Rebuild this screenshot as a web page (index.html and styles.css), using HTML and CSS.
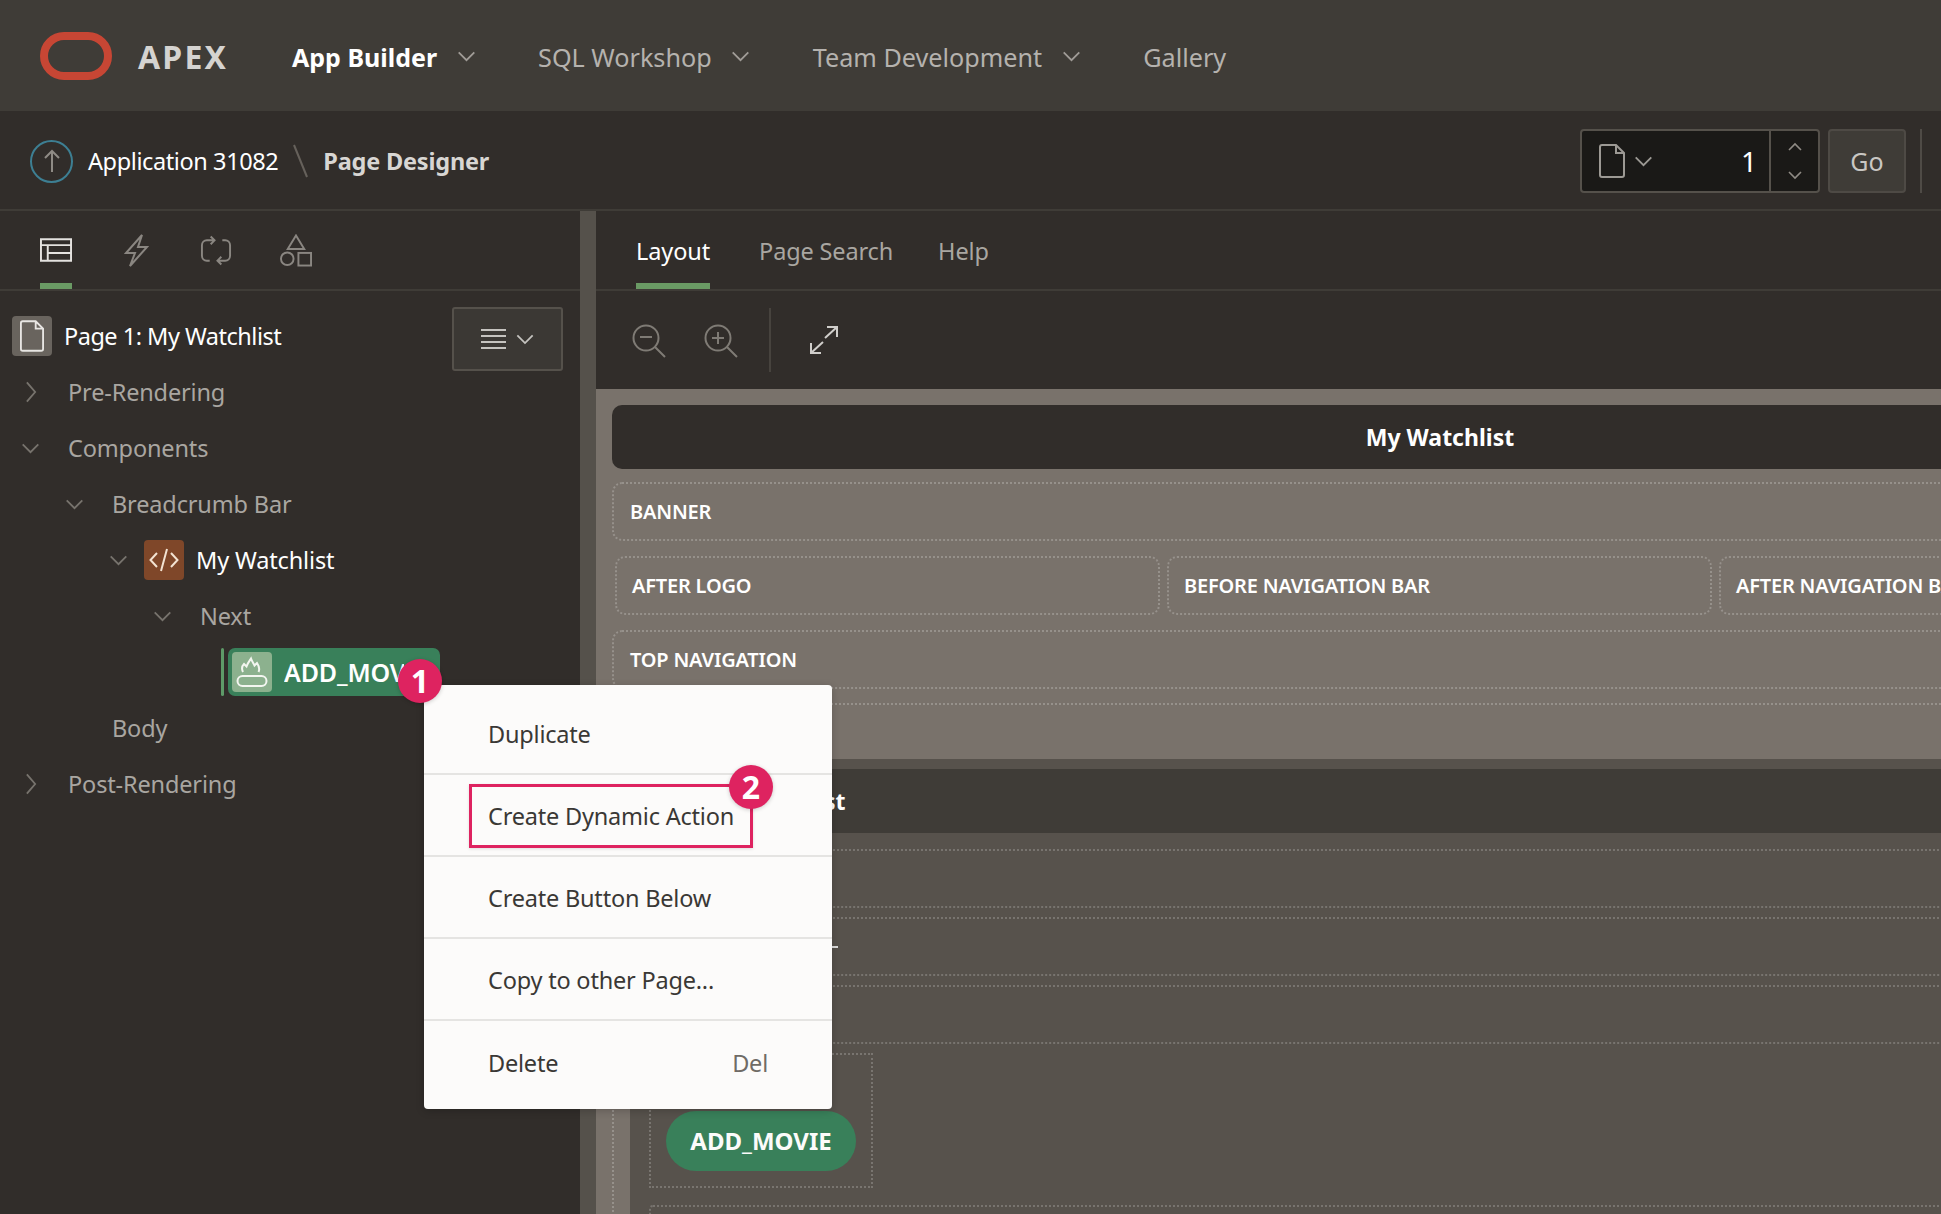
FILE: index.html
```html
<!DOCTYPE html>
<html lang="en">
<head>
  <meta charset="UTF-8" />
  <title>Page Designer</title>
  <link rel="stylesheet" href="styles.css">
</head>
<body>
  <svg class="sprite" width="0" height="0">
    <symbol id="chev-down" viewBox="0 0 20 12"><path d="M1.5 1.5 10 10l8.5-8.5" fill="none" stroke="currentColor" stroke-width="2"/></symbol>
    <symbol id="chev-right" viewBox="0 0 12 24"><path d="M1.5 1.5 10.5 12l-9 10.5" fill="none" stroke="currentColor" stroke-width="2"/></symbol>
    <symbol id="doc" viewBox="0 0 26 34"><path d="M3 1h14l8 8v22a2 2 0 0 1-2 2H3a2 2 0 0 1-2-2V3a2 2 0 0 1 2-2zM17 1v8h8" fill="none" stroke="currentColor" stroke-width="2"/></symbol>
  </svg>

  <div class="page">
    <header class="topbar">
      <svg class="logo" width="72" height="48" viewBox="0 0 72 48"><rect x="4" y="4" width="64" height="40" rx="20" fill="none" stroke="#c74634" stroke-width="8"/></svg>
      <span class="brand">APEX</span>
      <nav class="mainnav">
        <a class="nav-item nav-active">App Builder <svg class="nav-chev"><use href="#chev-down"/></svg></a>
        <a class="nav-item">SQL Workshop <svg class="nav-chev"><use href="#chev-down"/></svg></a>
        <a class="nav-item">Team Development <svg class="nav-chev"><use href="#chev-down"/></svg></a>
        <a class="nav-item">Gallery</a>
      </nav>
    </header>

    <div class="crumbbar">
      <span class="up-circle">
        <svg width="18" height="24" viewBox="0 0 18 24"><path d="M9 23V2M2 9l7-7 7 7" fill="none" stroke="#8f8b85" stroke-width="2"/></svg>
      </span>
      <span class="crumb">Application 31082</span>
      <svg class="crumb-sep" width="15" height="34" viewBox="0 0 15 34"><path d="M1 1l13 32" stroke="#66615b" stroke-width="2"/></svg>
      <span class="crumb crumb-current">Page Designer</span>

      <div class="page-picker">
        <div class="picker-main">
          <svg class="picker-doc"><use href="#doc"/></svg>
          <svg class="picker-chev"><use href="#chev-down"/></svg>
          <span class="picker-num">1</span>
        </div>
        <div class="picker-steps">
          <svg class="step-up" width="14" height="9" viewBox="0 0 14 9"><path d="M1 8l6-6 6 6" fill="none" stroke="currentColor" stroke-width="1.6"/></svg>
          <svg width="14" height="9" viewBox="0 0 14 9"><path d="M1 1l6 6 6-6" fill="none" stroke="currentColor" stroke-width="1.6"/></svg>
        </div>
      </div>
      <button class="go-btn">Go</button>
      <span class="bar-sep"></span>
    </div>

    <div class="workspace">
      <aside class="sidebar">
        <div class="side-tabs">
          <span class="side-tab side-tab-on">
            <svg width="33" height="24" viewBox="0 0 33 24"><path d="M1 1h31v22H1zM1 7h31M8 7v16M8 15h24" fill="none" stroke="currentColor" stroke-width="2"/></svg>
          </span>
          <span class="side-tab">
            <svg width="25" height="33" viewBox="0 0 25 33"><path d="M18 1 2 19h9L6 32l17-19h-9z" fill="none" stroke="currentColor" stroke-width="2"/></svg>
          </span>
          <span class="side-tab">
            <svg width="33" height="33" viewBox="0 0 33 33"><path d="M14 6H7a5 5 0 0 0-5 5v11a5 5 0 0 0 5 5h3M11 2l4 4-4 4M19 27h7a5 5 0 0 0 5-5V11a5 5 0 0 0-5-5h-3M22 23l-4 4 4 4" fill="none" stroke="currentColor" stroke-width="2"/></svg>
          </span>
          <span class="side-tab">
            <svg width="33" height="33" viewBox="0 0 33 33"><path d="M16.5 1 25 15H8z" fill="none" stroke="currentColor" stroke-width="2"/><circle cx="7.5" cy="25" r="6.5" fill="none" stroke="currentColor" stroke-width="2"/><rect x="19" y="19" width="13" height="13" fill="none" stroke="currentColor" stroke-width="2"/></svg>
          </span>
        </div>

        <div class="tree">
          <div class="tree-head">
            <span class="tile tile-page"><svg width="24" height="34"><use href="#doc"/></svg></span>
            <span class="tree-title">Page 1: My Watchlist</span>
            <button class="tree-menu">
              <svg width="25" height="22" viewBox="0 0 25 22"><path d="M0 2h25M0 8h25M0 14h25M0 20h25" stroke="currentColor" stroke-width="2"/></svg>
              <svg class="tree-menu-chev"><use href="#chev-down"/></svg>
            </button>
          </div>
          <div class="node lvl-0"><span class="slot"><svg class="chev-r"><use href="#chev-right"/></svg></span>Pre-Rendering</div>
          <div class="node lvl-0"><span class="slot"><svg class="chev-d"><use href="#chev-down"/></svg></span>Components</div>
          <div class="node lvl-1"><span class="slot"><svg class="chev-d"><use href="#chev-down"/></svg></span>Breadcrumb Bar</div>
          <div class="node lvl-2 node-bright">
            <span class="slot slot-short"><svg class="chev-d"><use href="#chev-down"/></svg></span>
            <span class="tile tile-code">
              <svg width="30" height="26" viewBox="0 0 30 26"><path d="M8 6 1.5 13 8 20M22 6l6.5 7L22 20M18 2l-6 22" fill="none" stroke="#f3e3d2" stroke-width="2"/></svg>
            </span>
            My Watchlist
          </div>
          <div class="node lvl-3"><span class="slot"><svg class="chev-d"><use href="#chev-down"/></svg></span>Next</div>
          <div class="node lvl-4">
            <span class="sel-mark"></span>
            <div class="sel-pill">
              <span class="tile tile-flame">
                <svg width="40" height="40" viewBox="0 0 40 40"><rect x="5.5" y="24" width="29" height="10" rx="5" fill="none" stroke="currentColor" stroke-width="2"/><path d="M11 20c-1.5-3-1-6 1-8l2.5 2.5c1-3 2.5-5 4.5-8 1 3 2.5 5 3.5 7l2.5-2.5c2 3 3 6 1.5 9" fill="none" stroke="currentColor" stroke-width="2"/></svg>
              </span>
              <span class="sel-text">ADD_MOVIE</span>
              <span class="badge badge-one">1</span>
            </div>
          </div>
          <div class="node lvl-1 no-chev">Body</div>
          <div class="node lvl-0"><span class="slot"><svg class="chev-r"><use href="#chev-right"/></svg></span>Post-Rendering</div>
        </div>
      </aside>

      <div class="splitter"></div>

      <main class="designer">
        <div class="tabs">
          <a class="tab tab-on">Layout</a>
          <a class="tab tab-mid">Page Search</a>
          <a class="tab">Help</a>
        </div>
        <div class="toolbar">
          <svg class="tool" width="34" height="34" viewBox="0 0 34 34"><circle cx="14" cy="14" r="12.5" fill="none" stroke="currentColor" stroke-width="2"/><path d="M8 13h12M23 23l10 10" fill="none" stroke="currentColor" stroke-width="2"/></svg>
          <svg class="tool" width="34" height="34" viewBox="0 0 34 34"><circle cx="14" cy="14" r="12.5" fill="none" stroke="currentColor" stroke-width="2"/><path d="M8 14h12M14 8v12M23 23l10 10" fill="none" stroke="currentColor" stroke-width="2"/></svg>
          <span class="tool-sep"></span>
          <svg class="tool-expand" width="28" height="30" viewBox="0 0 28 30"><path d="M17 2h10v10M27 2 15 13M11 28H1V18M1 28l12-11" fill="none" stroke="currentColor" stroke-width="2"/></svg>
        </div>

        <div class="canvas">
          <div class="canvas-inner">
            <div class="title-bar">My Watchlist</div>
            <div class="slot-box">BANNER</div>
            <div class="slot-cols">
              <div class="slot-box">AFTER LOGO</div>
              <div class="slot-box">BEFORE NAVIGATION BAR</div>
              <div class="slot-box">AFTER NAVIGATION BAR</div>
            </div>
            <div class="slot-box">TOP NAVIGATION</div>
            <div class="body-slot">
              <div class="body-panel">
                <div class="region-head">My Watchlist</div>
                <div class="slot-box slot-dark"></div>
                <div class="slot-box slot-dark"><span class="tick"></span></div>
                <div class="slot-box slot-dark"></div>
                <div class="btn-slot"><span class="add-btn">ADD_MOVIE</span></div>
                <div class="slot-box slot-dark"></div>
              </div>
            </div>
          </div>
        </div>
      </main>
    </div>

    <div class="ctx-menu">
      <div class="ctx-item">Duplicate</div>
      <div class="ctx-item"><span class="ctx-mark">Create Dynamic Action<span class="badge badge-two">2</span></span></div>
      <div class="ctx-item">Create Button Below</div>
      <div class="ctx-item">Copy to other Page...</div>
      <div class="ctx-item ctx-last">Delete<span class="ctx-key">Del</span></div>
    </div>
  </div>
</body>
</html>
```

FILE: styles.css
```css
* {
  box-sizing: border-box;
}
html, body {
  margin: 0;
  background: #312d2a;
}
body {
  font-family: "Noto Sans", "Open Sans", sans-serif;
  font-size: 23.5px;
  color: #a9a6a1;
}
.sprite {
  display: block;
  height: 0;
}
.page {
  position: relative;
  width: 1941px;
  height: 1214px;
  overflow: hidden;
}

/* top bar */
.topbar {
  height: 111px;
  background: #3f3c37;
  display: flex;
  align-items: center;
  padding-left: 40px;
}
.brand {
  margin-left: 26px;
  margin-top: 2px;
  width: 90px;
  font-size: 32px;
  font-weight: 700;
  letter-spacing: 2.2px;
  color: #d5d3d0;
}
.mainnav {
  display: flex;
  align-items: center;
  margin-left: 64px;
  margin-top: 2px;
}
.nav-item {
  display: flex;
  align-items: center;
  font-size: 25.2px;
  color: #b5b2ae;
  margin-right: 62.5px;
  white-space: pre;
}
.nav-active {
  font-weight: 700;
  color: #fff;
  font-size: 25px;
}
.nav-chev {
  width: 19px;
  height: 11px;
  margin-left: 13px;
  color: #a09c97;
}

/* breadcrumb bar */
.crumbbar {
  height: 100px;
  border-bottom: 2px solid #3f3c37;
  display: flex;
  align-items: center;
  padding-left: 30px;
  padding-top: 2px;
}
.up-circle {
  width: 43px;
  height: 43px;
  border: 2px solid #3d7f93;
  border-radius: 50%;
  display: flex;
  align-items: center;
  justify-content: center;
}
.crumb {
  margin-left: 15px;
  color: #fff;
  font-size: 23.5px;
  letter-spacing: -0.4px;
}
.crumb-sep {
  margin-left: 15px;
}
.crumb-current {
  font-weight: 700;
  color: #d8d6d3;
  letter-spacing: -0.2px;
}
.page-picker {
  margin-left: auto;
  width: 240px;
  height: 64px;
  display: flex;
  background: #1a1917;
  border: 2px solid #55514b;
  border-radius: 4px;
}
.picker-main {
  flex: 1;
  display: flex;
  align-items: center;
  padding-left: 17px;
  border-right: 2px solid #55514b;
}
.picker-doc {
  width: 26px;
  height: 34px;
  color: #9c9994;
}
.picker-chev {
  width: 19px;
  height: 11px;
  margin-left: 9px;
  color: #9c9994;
}
.picker-num {
  margin-left: auto;
  margin-right: 12px;
  color: #fff;
  font-size: 28px;
}
.picker-steps {
  width: 47px;
  display: flex;
  flex-direction: column;
  align-items: center;
  justify-content: center;
  color: #8f8b85;
}
.step-up {
  margin-bottom: 20px;
}
.go-btn {
  margin-left: 8px;
  width: 78px;
  height: 64px;
  background: #3f3c37;
  border: 2px solid #4e4a45;
  border-radius: 4px;
  color: #c9c7c3;
  font: inherit;
  font-size: 25px;
}
.bar-sep {
  width: 2px;
  height: 64px;
  margin-left: 14px;
  margin-right: 19px;
  background: #4f4b46;
}

/* main area */
.workspace {
  display: flex;
  height: 1003px;
}
.sidebar {
  width: 580px;
  flex: none;
}
.splitter {
  width: 16px;
  flex: none;
  background: #55514b;
}
.side-tabs {
  height: 80px;
  border-bottom: 2px solid #3f3c37;
  display: flex;
  padding-left: 40px;
  gap: 48px;
}
.side-tab {
  width: 32px;
  height: 78px;
  display: flex;
  align-items: center;
  justify-content: center;
  color: #8a8681;
}
.side-tab-on {
  color: #e4e2df;
  border-bottom: 6px solid #6a9a64;
  padding-top: 6px;
}

/* tree */
.tree {
  padding-top: 17px;
}
.tree-head, .node {
  height: 56px;
  display: flex;
  align-items: center;
  white-space: nowrap;
  letter-spacing: -0.15px;
}
.tree-head {
  padding-left: 12px;
}
.tile {
  width: 40px;
  height: 40px;
  flex: none;
  border-radius: 4px;
  display: flex;
  align-items: center;
  justify-content: center;
  margin-right: 12px;
}
.tile-page {
  background: #69645e;
  color: #e8e6e3;
}
.tile-code {
  background: #7f4729;
}
.tile-flame {
  background: #8cb18e;
  color: #f3f6f0;
  margin-left: 4px;
}
.tree-title {
  color: #fff;
  letter-spacing: -0.5px;
}
.tree-menu {
  margin-left: auto;
  margin-right: 17px;
  margin-top: 6px;
  width: 111px;
  height: 64px;
  flex: none;
  background: #3b3834;
  border: 2px solid #55514b;
  border-radius: 3px;
  color: #c5c3bf;
  display: flex;
  align-items: center;
  justify-content: center;
  gap: 10px;
  padding: 0;
}
.tree-menu-chev {
  width: 18px;
  height: 11px;
}
.slot {
  width: 47px;
  flex: none;
  display: flex;
  color: #77736d;
}
.slot-short {
  width: 35px;
}
.chev-d {
  width: 19px;
  height: 11px;
}
.chev-r {
  width: 12px;
  height: 22px;
  margin-left: 4px;
}
.lvl-0 {
  padding-left: 21px;
}
.lvl-1 {
  padding-left: 65px;
}
.lvl-2 {
  padding-left: 109px;
}
.lvl-3 {
  padding-left: 153px;
}
.lvl-4 {
  padding-left: 221px;
}
.no-chev {
  padding-left: 112px;
}
.node-bright {
  color: #fff;
}
.sel-mark {
  width: 3px;
  height: 48px;
  margin-right: 4px;
  background: #5e9a68;
  border-radius: 2px;
}
.sel-pill {
  position: relative;
  width: 212px;
  height: 48px;
  border-radius: 7px;
  background: #39805a;
  display: flex;
  align-items: center;
}
.sel-text {
  color: #fff;
  font-size: 25px;
  font-weight: 600;
  width: 120px;
  overflow: hidden;
}
.badge {
  position: absolute;
  width: 44px;
  height: 44px;
  border-radius: 50%;
  background: #de2360;
  color: #fff;
  font-size: 32px;
  font-weight: 700;
  line-height: 44px;
  text-align: center;
  letter-spacing: 0;
  box-shadow: 0 1px 4px rgba(0, 0, 0, 0.2);
  z-index: 3;
}
.badge-one {
  left: 170px;
  top: 11px;
}
.badge-two {
  right: -23px;
  top: -22px;
}

/* designer */
.designer {
  flex: 1;
  min-width: 0;
  display: flex;
  flex-direction: column;
}
.tabs {
  height: 80px;
  border-bottom: 2px solid #3f3c37;
  display: flex;
  padding-left: 40px;
  gap: 49px;
}
.tab {
  height: 78px;
  line-height: 80px;
  letter-spacing: -0.1px;
}
.tab-mid {
  margin-right: -4px;
  letter-spacing: -0.15px;
}
.tab-on {
  color: #fff;
  border-bottom: 6px solid #6a9a64;
}
.toolbar {
  height: 98px;
  display: flex;
  align-items: center;
  padding-left: 36px;
  color: #7f7b75;
}
.tool {
  margin-right: 38px;
  margin-top: 1px;
}
.tool-sep {
  width: 2px;
  height: 64px;
  background: #47433e;
  margin-left: -7px;
}
.tool-expand {
  margin-left: 39px;
  color: #d0cecb;
}

/* page layout canvas */
.canvas {
  flex: 1;
  background: #79726b;
  overflow: hidden;
  padding: 16px 0 0 16px;
}
.canvas-inner {
  width: 1656px;
  display: flex;
  flex-direction: column;
  font-size: 20px;
  font-weight: 600;
  color: #fff;
}
.title-bar {
  height: 64px;
  background: #312d2a;
  border-radius: 10px 0 0 10px;
  display: flex;
  align-items: center;
  justify-content: center;
  font-size: 23px;
  font-weight: 700;
  margin-bottom: 13px;
}
.slot-box {
  height: 59px;
  border: 2px dotted rgba(255, 255, 255, 0.22);
  border-radius: 10px;
  display: flex;
  align-items: center;
  padding-left: 16px;
  margin-bottom: 15px;
  letter-spacing: -0.2px;
}
.slot-cols {
  display: grid;
  grid-template-columns: 545px 545px 545px;
  gap: 7px;
  padding-left: 3px;
}
.slot-cols .slot-box {
  padding-left: 15px;
}
.slot-dark {
  margin-bottom: 9px;
  margin-left: 19px;
  border-color: rgba(255, 255, 255, 0.2);
  border-radius: 4px;
}
.tick {
  width: 6px;
  height: 2px;
  margin-left: 165px;
  background: #ddd;
}
.body-slot {
  height: 520px;
  border-top: 2px dotted rgba(255, 255, 255, 0.22);
  border-left: 2px dotted rgba(255, 255, 255, 0.22);
  margin-top: -1px;
  padding: 54px 0 0 16px;
}
.body-panel {
  height: 460px;
  background: #57524c;
  padding-top: 10px;
}
.region-head {
  height: 64px;
  background: #3f3c37;
  display: flex;
  align-items: center;
  padding-left: 67px;
  font-size: 23px;
  font-weight: 700;
  margin-bottom: 16px;
}
.btn-slot {
  width: 224px;
  height: 135px;
  margin: 1px 0 17px 19px;
  border: 2px dotted rgba(255, 255, 255, 0.2);
  display: flex;
  align-items: flex-end;
  padding: 0 0 15px 15px;
}
.add-btn {
  width: 190px;
  height: 60px;
  border-radius: 30px;
  background: #39805a;
  color: #fcfbfa;
  font-size: 24px;
  font-weight: 700;
  line-height: 60px;
  text-align: center;
}

/* context menu */
.ctx-menu {
  position: absolute;
  left: 424px;
  top: 685px;
  width: 408px;
  height: 424px;
  padding: 8px 0;
  background: #fcfbfa;
  border-radius: 4px;
  box-shadow: 0 2px 8px rgba(0, 0, 0, 0.2);
  color: #3a3835;
  z-index: 2;
}
.ctx-item {
  height: 82px;
  border-bottom: 2px solid #e5e4e2;
  display: flex;
  align-items: center;
  padding: 1px 64px 0;
  letter-spacing: -0.2px;
}
.ctx-last {
  border-bottom: 0;
  justify-content: space-between;
}
.ctx-key {
  color: #6f6b66;
}
.ctx-mark {
  position: relative;
  height: 64px;
  margin-left: -19px;
  padding: 0 16px;
  border: 3px solid #de2360;
  display: flex;
  align-items: center;
  white-space: nowrap;
  width: 284px;
  box-shadow: 0 1px 3px rgba(0, 0, 0, 0.12);
}
```
